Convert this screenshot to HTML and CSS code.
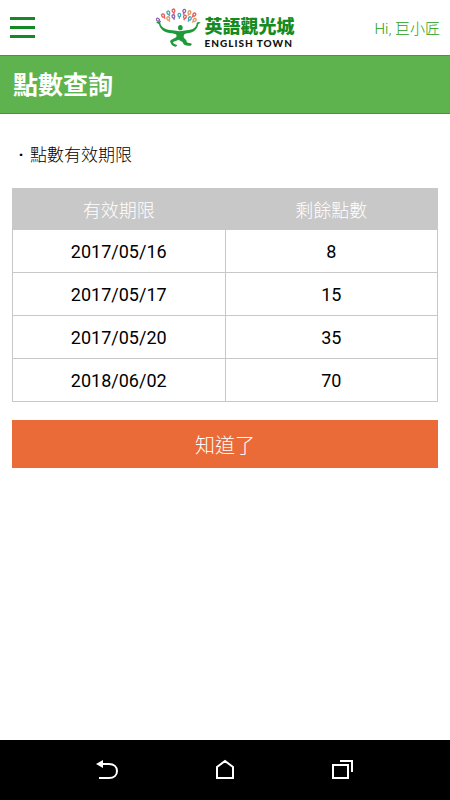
FILE: index.html
```html
<!DOCTYPE html>
<html lang="zh-Hant">
<head>
    <meta charset="UTF-8">
    <meta name="viewport" content="width=device-width, initial-scale=1.0">
    <title>點數查詢</title>
    <link rel="stylesheet" href="styles.css">
</head>
<body>

    <!-- Header -->
    <header class="header">
        <button class="menu-btn" type="button" aria-label="Menu">
            <span></span>
            <span></span>
            <span></span>
        </button>

        <a class="logo" href="#">
            <svg class="logo-mark" viewBox="0 0 135 117" aria-hidden="true">
                <defs>
                    <g id="hand">
                        <ellipse cx="0" cy="-3" rx="4" ry="5"/>
                        <path d="M0 2 V8"/>
                    </g>
                </defs>
                <g fill="#1f9a3a">
                    <path d="M0 43 C8 40 13 41 13 45 C14 56 27 66 48 67 C58 67 62 70 70 70 C79 70 83 67 92 67 C112 66 122 57 122 45 C125 41 130 42 134 44 L127 48 C124 65 111 75 93 76 C85 77 83 80 83 87 C84 94 93 93 92 102 C96 107 102 104 108 108 L104 113 C96 113 86 113 82 107 C81 100 73 99 67 95 C60 100 52 99 51 103 C52 107 57 110 64 111 L60 116 C50 116 45 109 42 99 C47 93 56 91 61 87 C64 80 58 77 48 76 C27 75 12 65 9 49 Z"/>
                    <ellipse cx="73" cy="59" rx="7" ry="8"/>
                </g>
                <g fill="none" stroke-width="4">
                    <g stroke="#e75a57">
                        <use href="#hand" transform="translate(23 25) rotate(-35)"/>
                        <use href="#hand" transform="translate(53 11) rotate(-10)"/>
                        <use href="#hand" transform="translate(86 29) rotate(15)"/>
                        <use href="#hand" transform="translate(113 22) rotate(40)"/>
                    </g>
                    <g stroke="#8a65b0">
                        <use href="#hand" transform="translate(8 37) rotate(-50)"/>
                        <use href="#hand" transform="translate(53 28) rotate(-15)"/>
                        <use href="#hand" transform="translate(84 12) rotate(15)"/>
                    </g>
                    <g stroke="#45a6b9">
                        <use href="#hand" transform="translate(38 17) rotate(-20)"/>
                        <use href="#hand" transform="translate(70 24)"/>
                        <use href="#hand" transform="translate(100 34) rotate(30)"/>
                    </g>
                    <g stroke="#e9965b">
                        <use href="#hand" transform="translate(38 34) rotate(-25)"/>
                        <use href="#hand" transform="translate(99 16) rotate(25)"/>
                        <use href="#hand" transform="translate(114 38) rotate(45)"/>
                    </g>
                </g>
            </svg>
            <span class="logo-text">
                <span class="logo-zh">英語觀光城</span>
                <span class="logo-en">ENGLISH TOWN</span>
            </span>
        </a>

        <span class="user">Hi, 巨小匠</span>
    </header>

    <h1 class="page-title">點數查詢</h1>

    <!-- Points -->
    <main class="content">
        <h2 class="section-title">點數有效期限</h2>

        <table class="points">
            <thead>
                <tr><th>有效期限</th><th>剩餘點數</th></tr>
            </thead>
            <tbody>
                <tr><td>2017/05/16</td><td>8</td></tr>
                <tr><td>2017/05/17</td><td>15</td></tr>
                <tr><td>2017/05/20</td><td>35</td></tr>
                <tr><td>2018/06/02</td><td>70</td></tr>
            </tbody>
        </table>

        <button class="btn" type="button">知道了</button>
    </main>

    <!-- System navigation -->
    <nav class="nav-bar">
        <button type="button" aria-label="Back">
            <svg viewBox="0 0 22 22">
                <path d="M6 5 H13 C18 5 21 8 21 12 C21 16 18 19 13 19 H3" fill="none" stroke="#fff" stroke-width="2"/>
                <path d="M0 5 L7 1 V9 Z" fill="#fff"/>
            </svg>
        </button>
        <button type="button" aria-label="Home">
            <svg viewBox="0 0 22 22">
                <path d="M3 19 V8 L11 2 L19 8 V19 Z" fill="none" stroke="#fff" stroke-width="2"/>
            </svg>
        </button>
        <button type="button" aria-label="Recent apps">
            <svg viewBox="0 0 22 22">
                <path d="M1 6 H16 V19 H1 Z M8 2 H20 V13" fill="none" stroke="#fff" stroke-width="2"/>
            </svg>
        </button>
    </nav>

</body>
</html>
```
FILE: styles.css
```css
* {
    box-sizing: border-box;
}
body {
    display: flex;
    flex-direction: column;
    min-height: 100vh;
    margin: 0;
    font-family: Roboto, "Noto Sans CJK TC", sans-serif;
    font-size: 18px;
    color: #000;
    background: #fff;
}
button {
    padding: 0;
    border: none;
    background: none;
    font-family: inherit;
    cursor: pointer;
}
.header {
    display: grid;
    grid-template-columns: 1fr auto 1fr;
    align-items: center;
    height: 55px;
    padding: 0 10px;
}
.menu-btn {
    display: flex;
    flex-direction: column;
    gap: 6px;
    width: 25px;
}
.menu-btn span {
    height: 3px;
    background: #158a22;
}
.logo {
    display: flex;
    align-items: center;
    gap: 4px;
    text-decoration: none;
}
.logo-mark {
    width: 45px;
    height: 39px;
}
.logo-text {
    display: flex;
    flex-direction: column;
    padding-top: 10px;
}
.logo-zh {
    font-size: 18px;
    font-weight: 900;
    line-height: 20px;
    color: #148c22;
}
.logo-en {
    font-family: Lato, sans-serif;
    font-size: 10px;
    font-weight: 900;
    line-height: 12px;
    letter-spacing: 1px;
    color: #111;
}
.user {
    justify-self: end;
    font-size: 15px;
    font-weight: 300;
    color: #22a012;
}
.page-title {
    margin: 0;
    padding: 3px 13px 0;
    border-top: 1px solid #36a41d;
    border-bottom: 1px solid #36a41d;
    font-size: 25px;
    font-weight: 700;
    line-height: 54px;
    color: #fff;
    background: #5fb34e;
}
.content {
    flex: 1;
    padding: 28px 12px;
}
.section-title {
    margin: 0 0 20px;
    font-size: 17px;
    font-weight: 300;
    line-height: 26px;
}
.section-title::before {
    content: "·";
    display: inline-block;
    width: 18px;
    font-weight: 700;
    text-align: center;
}
.points {
    width: 100%;
    border-collapse: collapse;
    table-layout: fixed;
    text-align: center;
}
.points th,
.points td {
    padding: 0;
    border: 1px solid #c8c8c8;
}
.points th {
    height: 41px;
    font-weight: 300;
    color: #fff;
    background: #c8c8c8;
}
.points td {
    height: 43px;
}
.btn {
    display: block;
    width: 100%;
    height: 48px;
    margin-top: 18px;
    font-size: 20px;
    font-weight: 300;
    color: #fff;
    background: #eb6b38;
}
.nav-bar {
    display: flex;
    justify-content: space-evenly;
    align-items: center;
    height: 60px;
    background: #000;
}
.nav-bar svg {
    display: block;
    width: 22px;
    height: 22px;
}
```
